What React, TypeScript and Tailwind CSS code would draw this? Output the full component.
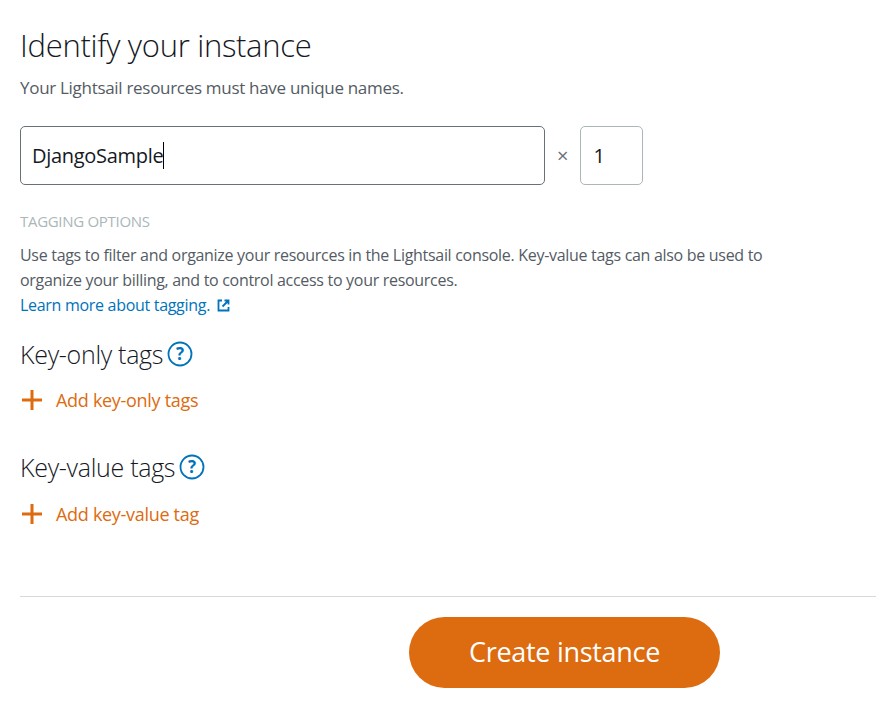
import React from "react";

const Help = () => (
  <svg width="26" height="26" viewBox="0 0 26 26" className="ml-[4px]">
    <circle cx="13" cy="13" r="11.5" fill="none" stroke="#0073bb" strokeWidth="1.8" />
    <text x="13" y="19" textAnchor="middle" fontSize="17" fontWeight="700" fill="#0073bb" fontFamily="'Open Sans', sans-serif">?</text>
  </svg>
);

const Plus = () => (
  <svg width="24" height="24" viewBox="0 0 24 24" className="mr-[12px]">
    <path d="M12 2v20M2 12h20" stroke="#dd6b10" strokeWidth="3" />
  </svg>
);

export default function App() {
  return (
    <div className="w-[876px] h-[715px] bg-white pl-[20px] pt-[24px] text-[#16191f] overflow-hidden" style={{ fontFamily: "'Open Sans', Lato, sans-serif" }}>
      <h1 className="text-[31px] font-light leading-[42px] tracking-[-0.3px]">Identify your instance</h1>
      <p className="text-[17px] text-[#545b64] mt-[10px] leading-[24px] tracking-[-0.3px]">Your Lightsail resources must have unique names.</p>
      <div className="flex items-center mt-[26px]">
        <div className="w-[525px] h-[59px] border border-[#687078] rounded-[5px] flex items-center pl-[11px] text-[20px] tracking-[-0.3px]">
          DjangoSample<span className="w-[1px] h-[27px] bg-black" />
        </div>
        <span className="mx-[12px] text-[#687078] text-[20px]">×</span>
        <div className="w-[63px] h-[59px] border border-[#aab7b8] rounded-[5px] flex items-center pl-[12px] text-[20px]">1</div>
      </div>
      <div className="mt-[26px] text-[15px] text-[#aab7b8] leading-[20px] tracking-[-0.3px]">TAGGING OPTIONS</div>
      <p className="mt-[12px] text-[16px] text-[#545b64] leading-[25px] w-[760px] tracking-[-0.3px]">
        Use tags to filter and organize your resources in the Lightsail console. Key-value tags can also be used to organize your billing, and to control access to your resources.
      </p>
      <a className="text-[16px] text-[#0073bb] leading-[25px] flex items-center tracking-[-0.3px]">
        Learn more about tagging.
        <svg width="13" height="13" viewBox="0 0 13 13" className="ml-[7px]">
          <path d="M5 1.5H1.5v10h10V8M7.5 1.5h4v4M11.5 1.5L5.5 7.5" fill="none" stroke="#0073bb" strokeWidth="1.8" />
        </svg>
      </a>
      <div className="flex items-center mt-[19px] text-[25px] font-light leading-[34px] tracking-[-0.3px]">Key-only tags<Help /></div>
      <div className="flex items-center mt-[17px] text-[18px] leading-[24px] text-[#dd6b10] tracking-[-0.3px]"><Plus />Add key-only tags</div>
      <div className="flex items-center mt-[38px] text-[25px] font-light leading-[34px] tracking-[-0.3px]">Key-value tags<Help /></div>
      <div className="flex items-center mt-[18px] text-[18px] leading-[24px] text-[#dd6b10] tracking-[-0.3px]"><Plus />Add key-value tag</div>
      <div className="mt-[70px] h-[1px] bg-[#d5dbdb]" />
      <div className="pl-[389px] mt-[20px]">
        <button className="w-[311px] h-[71px] rounded-full bg-[#dd6b10] text-white text-[27px] tracking-[-0.3px]">Create instance</button>
      </div>
    </div>
  );
}
